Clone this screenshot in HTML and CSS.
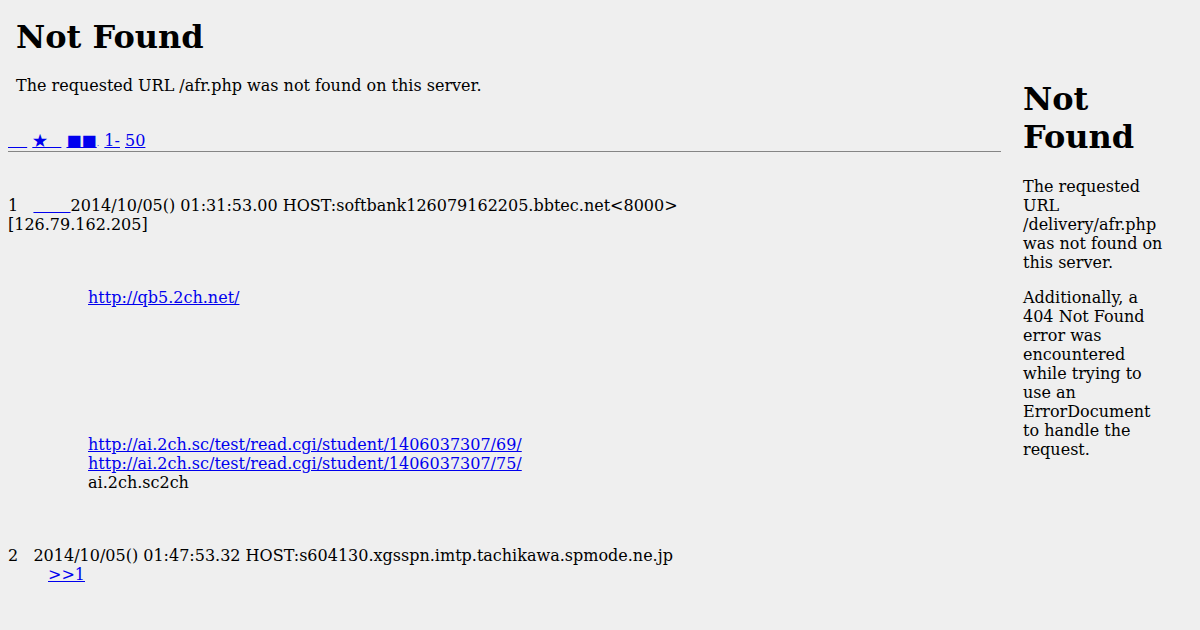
FILE: index.html
```html
<!DOCTYPE html>
<html lang="ja">
<head>
<meta charset="utf-8">
<title>Not Found</title>
<link rel="stylesheet" href="styles.css">
</head>
<body>
<div class="layout">
  <div class="main">
    <div class="ad-top">
      <h1 class="title">Not Found</h1>
      <p class="msg">The requested URL /afr.php was not found on this server.</p>
    </div>
    <div class="nav"><a href="#">&emsp;&#8201;</a> <a href="#">★&ensp;&nbsp;</a> <a href="#">■■</a><span class="dot">.</span> <a href="#">1-</a> <a href="#">50</a></div>
    <hr class="rule">
    <dl class="thread">
      <dt class="head">1&nbsp;&nbsp;&nbsp;<a href="#" class="name">&emsp;&emsp;&nbsp;</a>2014/10/05() 01:31:53.00 HOST:softbank126079162205.bbtec.net&lt;8000&gt;<br>[126.79.162.205]</dt>
      <dd class="body body-deep">
        <div class="para first"><a href="#">http://qb5.2ch.net/</a></div>
        <div class="para second"><a href="#">http://ai.2ch.sc/test/read.cgi/student/1406037307/69/</a><br><a href="#">http://ai.2ch.sc/test/read.cgi/student/1406037307/75/</a><br>ai.2ch.sc2ch</div>
      </dd>
      <dt class="head next">2&nbsp;&nbsp;&nbsp;2014/10/05() 01:47:53.32 HOST:s604130.xgsspn.imtp.tachikawa.spmode.ne.jp</dt>
      <dd class="body"><a href="#">&gt;&gt;1</a></dd>
    </dl>
  </div>
  <div class="side">
    <h1 class="title side-title">Not Found</h1>
    <p class="side-p">The requested URL /delivery/afr.php was not found on this server.</p>
    <p class="side-p">Additionally, a 404 Not Found error was encountered while trying to use an ErrorDocument to handle the request.</p>
  </div>
</div>
</body>
</html>
```

FILE: styles.css
```css
html {
  background: #efefef;
}
body {
  margin: 8px;
  background: #efefef;
  color: #000;
  font-family: "DejaVu Serif", serif;
  font-size: 16px;
  line-height: 19px;
}
a {
  color: #0000ee;
}
.layout {
  display: flex;
  align-items: flex-start;
}
.main {
  flex: 0 0 993px;
  width: 993px;
}
.ad-top {
  padding-left: 8px;
}
.title {
  font-size: 32px;
  font-weight: bold;
  line-height: 38px;
}
.ad-top .title {
  margin: 10px 0 20px;
}
.msg {
  margin: 0;
}
.nav {
  margin-top: 36px;
  height: 19px;
  white-space: nowrap;
}
.dot {
  font-size: 8px;
  color: #0000ee;
}
.rule {
  margin: 1px 0 0;
  height: 0;
  border: 0;
  border-top: 1px solid #858585;
}
.thread {
  margin: 44px 0 0;
}
.head {
  margin: 0;
}
.head.next {
  margin-top: 54px;
}
.body {
  margin: 0 0 0 40px;
}
.body-deep {
  margin-left: 80px;
}
.para.first {
  margin-top: 54px;
}
.para.second {
  margin-top: 128px;
}
.side {
  flex: 0 0 144px;
  width: 144px;
  margin-left: 22px;
}
.side-title {
  margin: 72px 0 21px;
}
.side-p {
  margin: 16px 0;
}
.side-title + .side-p {
  margin-top: 21px;
}
```
